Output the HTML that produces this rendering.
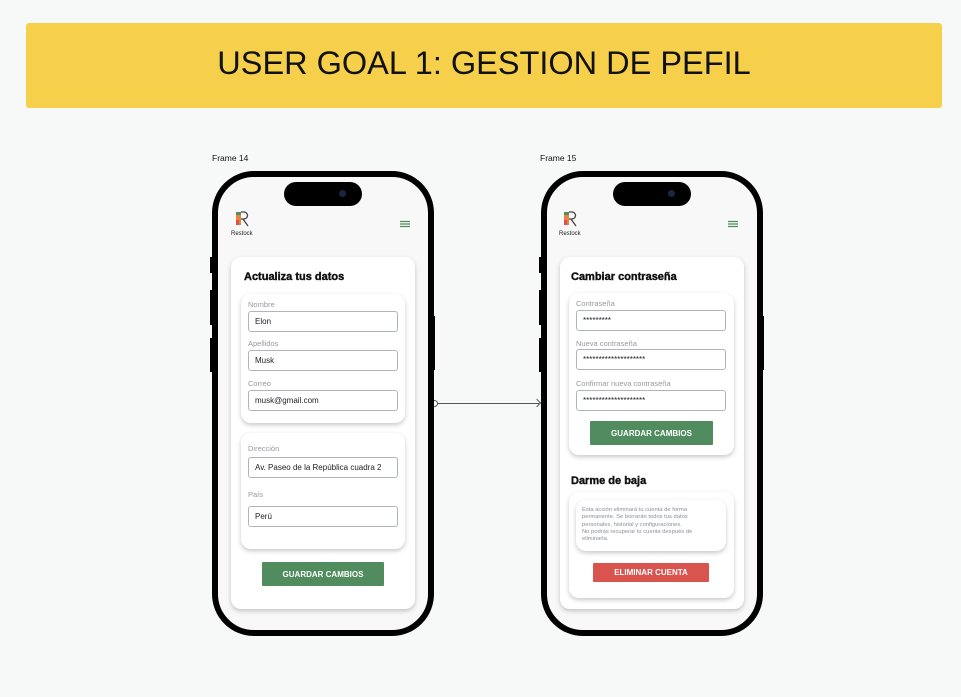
<!DOCTYPE html>
<html><head><meta charset="utf-8"><style>
*{margin:0;padding:0;box-sizing:border-box}
body{width:961px;height:697px;background:#f7f9f8;position:relative;overflow:hidden;font-family:"Liberation Sans",sans-serif}
.a{position:absolute}
.banner{left:26px;top:23px;width:916px;height:85px;background:#f6d04b;border-radius:3px;display:flex;align-items:center;justify-content:center;font-size:32.5px;color:#111;padding-bottom:4px}
.fl{font-size:8.5px;color:#111}
.phone{width:222px;height:465px;border:6px solid #000;border-radius:42px;background:#f7f8f7}
.notch{width:78px;height:24px;background:#000;border-radius:12px}
.notch i{position:absolute;right:16px;top:8px;width:7px;height:7px;border-radius:50%;background:#1b2740}
.btn-side{background:#000;width:3px}
.card{background:#fff;border-radius:10px;box-shadow:0 2px 5px rgba(0,0,0,.22)}
.h{font-weight:bold;font-size:11px;color:#111;-webkit-text-stroke:0.4px #111}
.lbl{font-size:7.5px;color:#999}
.inp{height:21px;border:1px solid #b0b4bd;border-radius:3px;background:#fff;font-size:8px;color:#222;padding-left:6px;line-height:19px}
.gbtn{background:#508c5e;color:#fff;font-weight:bold;font-size:8px;display:flex;align-items:center;justify-content:center;border-radius:1px}
.rs{font-size:6px;color:#222}
</style></head><body>
<div class="a banner">USER GOAL 1: GESTION DE PEFIL</div>
<div class="a fl" style="left:212px;top:153px">Frame 14</div>
<div class="a fl" style="left:540px;top:153px">Frame 15</div>

<div class="a" style="left:437px;top:403px;width:102px;border-top:1px solid #555"></div>
<div class="a" style="left:431px;top:400px;width:7px;height:7px;border:1px solid #555;border-radius:50%;background:#fff"></div>
<div class="a" style="left:534px;top:400px;width:6px;height:6px;border-top:1px solid #555;border-right:1px solid #555;transform:rotate(45deg)"></div>

<div class="a btn-side" style="left:210px;top:257px;height:16px"></div>
<div class="a btn-side" style="left:210px;top:290px;height:35px"></div>
<div class="a btn-side" style="left:210px;top:338px;height:34px"></div>
<div class="a btn-side" style="left:432px;top:316px;height:54px"></div>
<div class="a phone" style="left:212px;top:171px"></div>
<div class="a notch" style="left:284px;top:182px"><i></i></div>
<svg class="a" style="left:235px;top:211px" width="14" height="17" viewBox="0 0 14 17"><rect x="1" y="2" width="5" height="12" fill="#e8833a"/><rect x="1" y="1" width="5" height="3" fill="#4f8e5e"/><rect x="1" y="9" width="3" height="5" fill="#d9534f"/><path d="M6 1h3a3.5 3.5 0 0 1 0 7H6M8 8l5 7" stroke="#444" stroke-width="1.3" fill="none"/></svg>
<div class="a rs" style="left:231px;top:231px">Restock</div>
<svg class="a" style="left:400px;top:220px" width="10" height="8" viewBox="0 0 10 8"><path d="M0 1.5h10M0 4h10M0 6.5h10" stroke="#4f8e5e" stroke-width="1.3"/></svg>

<div class="a card" style="left:231px;top:257px;width:184px;height:352px"></div>
<div class="a h" style="left:244px;top:271px">Actualiza tus datos</div>
<div class="a card" style="left:241px;top:294px;width:164px;height:129px"></div>
<div class="a lbl" style="left:248px;top:300px">Nombre</div>
<div class="a inp" style="left:248px;top:311px;width:150px">Elon</div>
<div class="a lbl" style="left:248px;top:339px">Apellidos</div>
<div class="a inp" style="left:248px;top:350px;width:150px">Musk</div>
<div class="a lbl" style="left:248px;top:379px">Correo</div>
<div class="a inp" style="left:248px;top:390px;width:150px">musk@gmail.com</div>
<div class="a card" style="left:241px;top:433px;width:164px;height:116px"></div>
<div class="a lbl" style="left:248px;top:444px">Dirección</div>
<div class="a inp" style="left:248px;top:457px;width:150px">Av. Paseo de la República cuadra 2</div>
<div class="a lbl" style="left:248px;top:490px">País</div>
<div class="a inp" style="left:248px;top:506px;width:150px">Perú</div>
<div class="a gbtn" style="left:262px;top:562px;width:122px;height:24px">GUARDAR CAMBIOS</div>

<div class="a btn-side" style="left:539px;top:257px;height:16px"></div>
<div class="a btn-side" style="left:539px;top:290px;height:35px"></div>
<div class="a btn-side" style="left:539px;top:338px;height:34px"></div>
<div class="a btn-side" style="left:761px;top:316px;height:54px"></div>
<div class="a phone" style="left:541px;top:171px"></div>
<div class="a notch" style="left:613px;top:182px"><i></i></div>
<svg class="a" style="left:563px;top:211px" width="14" height="17" viewBox="0 0 14 17"><rect x="1" y="2" width="5" height="12" fill="#e8833a"/><rect x="1" y="1" width="5" height="3" fill="#4f8e5e"/><rect x="1" y="9" width="3" height="5" fill="#d9534f"/><path d="M6 1h3a3.5 3.5 0 0 1 0 7H6M8 8l5 7" stroke="#444" stroke-width="1.3" fill="none"/></svg>
<div class="a rs" style="left:559px;top:231px">Restock</div>
<svg class="a" style="left:728px;top:220px" width="10" height="8" viewBox="0 0 10 8"><path d="M0 1.5h10M0 4h10M0 6.5h10" stroke="#4f8e5e" stroke-width="1.3"/></svg>

<div class="a card" style="left:560px;top:257px;width:184px;height:352px"></div>
<div class="a h" style="left:571px;top:271px">Cambiar contraseña</div>
<div class="a card" style="left:569px;top:293px;width:165px;height:162px"></div>
<div class="a lbl" style="left:576px;top:299px">Contraseña</div>
<div class="a inp" style="left:576px;top:310px;width:150px">*********</div>
<div class="a lbl" style="left:576px;top:339px">Nueva contraseña</div>
<div class="a inp" style="left:576px;top:349px;width:150px">********************</div>
<div class="a lbl" style="left:576px;top:379px">Confirmar nueva contraseña</div>
<div class="a inp" style="left:576px;top:390px;width:150px">********************</div>
<div class="a gbtn" style="left:590px;top:421px;width:123px;height:24px">GUARDAR CAMBIOS</div>

<div class="a h" style="left:571px;top:475px">Darme de baja</div>
<div class="a card" style="left:569px;top:492px;width:165px;height:106px"></div>
<div class="a card" style="left:576px;top:500px;width:150px;height:51px;padding:7px 14px 0 6px;font-size:5.8px;line-height:7.3px;color:#8a8f9a">Esta acción eliminará tu cuenta de forma permanente. Se borrarán todos tus datos personales, historial y configuraciones.<br>No podrás recuperar tu cuenta después de eliminarla.</div>
<div class="a gbtn" style="left:593px;top:563px;width:116px;height:19px;background:#d9534f">ELIMINAR CUENTA</div>
</body></html>
